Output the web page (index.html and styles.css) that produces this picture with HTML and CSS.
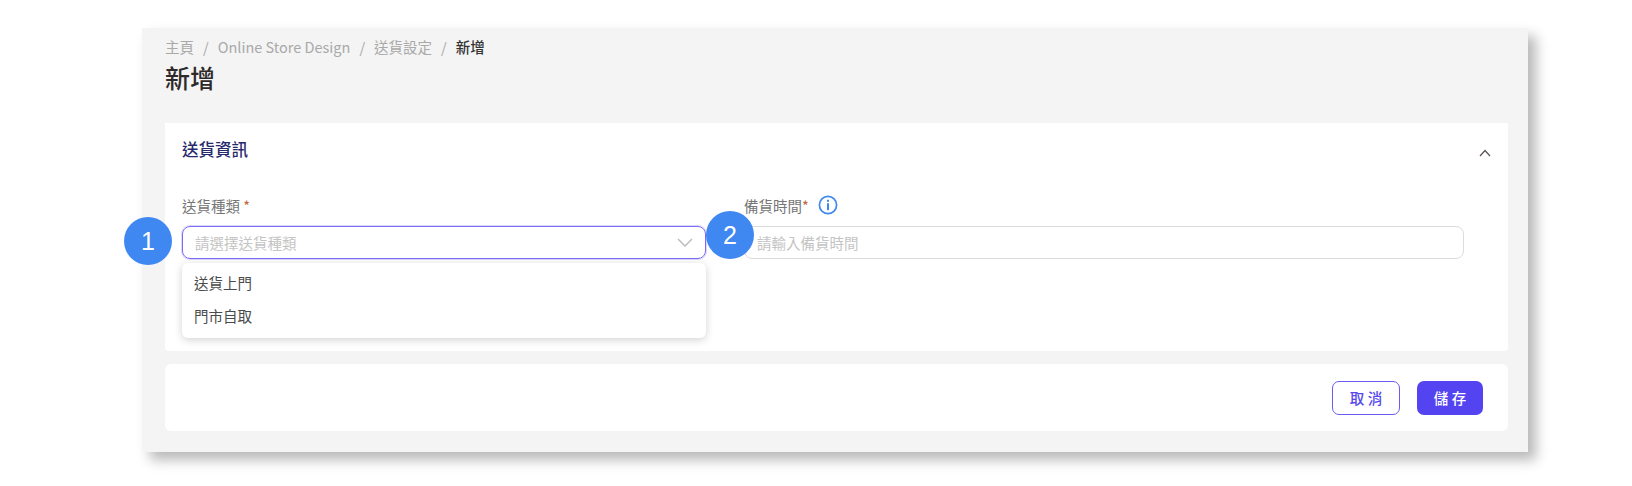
FILE: index.html
```html
<!DOCTYPE html>
<html lang="zh-Hant">

<head>
    <meta charset="UTF-8">
    <title>新增</title>
    <link rel="stylesheet" href="styles.css">
</head>

<body>
    <div id="panel">
        <div class="breadcrumb">
            <span>主頁</span><i>/</i><span>Online Store Design</span><i>/</i><span>送貨設定</span><i>/</i><b>新增</b>
        </div>
        <h1>新增</h1>

        <div class="card info">
            <div class="cardHead">
                <h2>送貨資訊</h2>
                <svg class="collapse" width="12" height="8" viewBox="0 0 12 8"><path d="M1 7 L6 1.5 L11 7" fill="none" stroke="#5a4f58" stroke-width="1.2"/></svg>
            </div>

            <div class="fields">
                <div class="field type">
                    <label>送貨種類&nbsp;<em>*</em></label>
                    <div class="select">
                        <span>請選擇送貨種類</span>
                        <svg width="16" height="9" viewBox="0 0 16 9"><path d="M1 1 L8 8 L15 1" fill="none" stroke="#bdbdbd" stroke-width="1.5"/></svg>
                    </div>
                    <div class="menu">
                        <div class="option">送貨上門</div>
                        <div class="option">門市自取</div>
                    </div>
                    <div class="badge one">1</div>
                </div>

                <div class="field time">
                    <label>備貨時間<em>*</em>
                        <svg class="infoIcon" width="20" height="20" viewBox="0 0 20 20"><circle cx="10" cy="10" r="8.6" fill="none" stroke="#3f88f2" stroke-width="1.7"/><rect x="9" y="8.2" width="2" height="7" fill="#3f88f2"/><rect x="9" y="4.8" width="2" height="2" fill="#3f88f2"/></svg>
                    </label>
                    <div class="input">請輸入備貨時間</div>
                    <div class="badge two">2</div>
                </div>
            </div>
        </div>

        <div class="card actions">
            <button class="btn cancel">取消</button>
            <button class="btn save">儲存</button>
        </div>
    </div>
</body>

</html>
```

FILE: styles.css
```css
body {
    margin: 0;
    padding: 28px 0 34px 142px;
    background-color: white;
    font-family: "Noto Sans CJK TC", "Noto Sans", sans-serif;
}

#panel {
    width: 1386px;
    height: 424px;
    padding: 0 20px 0 23px;
    box-sizing: border-box;
    background-color: #f4f4f4;
    box-shadow: 8px 8px 12px rgba(0, 0, 0, 0.28);
}

.breadcrumb {
    padding-top: 9px;
    height: 20px;
    line-height: 20px;
    font-size: 14.5px;
    color: #a9a9a9;
}

.breadcrumb i {
    font-style: normal;
    margin: 0 9px;
}

.breadcrumb b {
    font-weight: 500;
    color: #333;
}

h1 {
    margin: 3px 0 0;
    height: 34px;
    line-height: 34px;
    font-size: 25px;
    font-weight: 500;
    color: #2f2a2a;
}

.card {
    background-color: white;
    border-radius: 6px;
}

.info {
    height: 228px;
    margin-top: 29px;
    padding: 0 44px 0 17px;
    box-sizing: border-box;
    border-radius: 0 0 4px 4px;
}

.cardHead {
    display: flex;
    justify-content: space-between;
    align-items: center;
    height: 50px;
}

.cardHead h2 {
    margin: 0;
    padding-top: 2px;
    font-size: 16.5px;
    font-weight: 500;
    color: #27296d;
}

.collapse {
    margin: 10px -27px 0 0;
}

.fields {
    display: flex;
    gap: 38px;
    margin-top: 14px;
}

.field {
    position: relative;
}

.type {
    width: 524px;
}

.time {
    width: 720px;
}

label {
    display: flex;
    align-items: center;
    height: 24px;
    padding-top: 6px;
    margin-bottom: 9px;
    font-size: 14.5px;
    color: #767676;
}

label em {
    font-style: normal;
    color: #c0673c;
}

.infoIcon {
    margin: 0 0 0 9px;
}

.select,
.input {
    height: 33px;
    padding: 0 12px;
    box-sizing: border-box;
    border-radius: 8px;
    font-size: 14.5px;
    color: #c4c4c4;
    display: flex;
    align-items: center;
    justify-content: space-between;
}

.select {
    border: 1px solid #7b6cf6;
    box-shadow: 0 0 0 1px #dcd8fb;
}

.input {
    border: 1px solid #dcdcdc;
}

.menu {
    position: absolute;
    top: 76px;
    left: 0;
    width: 100%;
    padding: 3px 0;
    box-sizing: border-box;
    height: 75px;
    background-color: white;
    border-radius: 6px;
    box-shadow: 0 2px 8px rgba(0, 0, 0, 0.18);
}

.option {
    height: 33px;
    line-height: 33px;
    padding-left: 12px;
    font-size: 14.5px;
    color: #4a4a4a;
}

.badge {
    position: absolute;
    width: 48px;
    height: 48px;
    border-radius: 50%;
    background-color: #3f88f2;
    color: white;
    font-family: "Liberation Sans", Arial, sans-serif;
    font-size: 25px;
    display: flex;
    align-items: center;
    justify-content: center;
}

.one {
    top: 30px;
    left: -58px;
}

.two {
    top: 24px;
    left: -38px;
}

.actions {
    display: flex;
    justify-content: flex-end;
    align-items: center;
    gap: 17px;
    height: 67px;
    margin-top: 13px;
    padding-right: 25px;
}

.btn {
    height: 34px;
    padding: 0 0 0 3.5px;
    border-radius: 7px;
    font-family: inherit;
    font-size: 14.5px;
    font-weight: 500;
    letter-spacing: 3.5px;
}

.cancel {
    width: 68px;
    background-color: white;
    border: 1px solid #6a5cf2;
    color: #5646ee;
}

.save {
    width: 66px;
    background-color: #5443f0;
    border: none;
    color: white;
}
```
